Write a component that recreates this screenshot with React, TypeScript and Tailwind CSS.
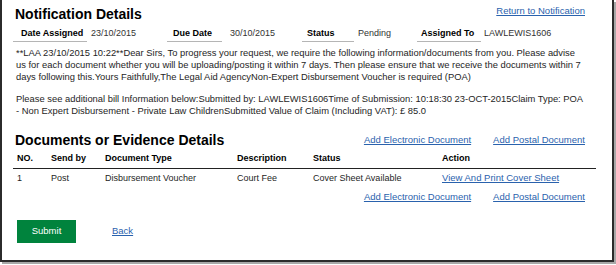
import React from 'react';

// Summary fields shown under the title
const fields = [
  { label: "Date Assigned", value: "23/10/2015", width: "w-[154px]", labelBox: "w-[74px] pl-[8px]", valueGap: "ml-[4px]" },
  { label: "Due Date", value: "30/10/2015", width: "w-[135px]", labelBox: "w-[55px] pl-[6px]", valueGap: "ml-[8px]" },
  { label: "Status", value: "Pending", width: "w-[115px]", labelBox: "w-[52px] pl-[5px]", valueGap: "ml-[4px]" },
  { label: "Assigned To", value: "LAWLEWIS1606", width: "flex-1", labelBox: "w-[64px] pl-[4px]", valueGap: "ml-[3px]" },
];

const columns = ["NO.", "Send by", "Document Type", "Description", "Status", "Action"];

const linkCls = "text-[#2a62ad] underline underline-offset-1 decoration-[#2a62ad]";

const AddLinks = () => (
  <div className="ml-auto mr-[11px] flex gap-[22px] text-[9.5px] leading-[12px]">
    <a href="#" className={linkCls}>Add Electronic Document</a>
    <a href="#" className={linkCls}>Add Postal Document</a>
  </div>
);

const NotificationDetails = () => {
  return (
    <div className="w-[616px] h-[265px] bg-white font-['Liberation_Sans',Arial,sans-serif] text-[#1e1e1e]">
      <div className="w-[614px] h-[262px] border-2 border-t-0 border-[#2b2b2b] shadow-[2px_2px_0_#a8a8a8] pl-[11px] pr-[16px]">
        {/* title row */}
        <div className="flex items-start h-[27px]">
          <h1 className="pl-[2px] pt-[7px] text-[14px] leading-[14px] font-bold text-black">Notification Details</h1>
          <a href="#" className={`ml-auto mr-[11px] mt-[5px] text-[9.5px] leading-[12px] ${linkCls}`}>Return to Notification</a>
        </div>

        {/* summary fields */}
        <div className="flex text-[9px] leading-[12px]">
          {fields.map((f) => (
            <div key={f.label} className={`flex items-start ${f.width}`}>
              <span className={`${f.labelBox} pb-[2px] border-b border-[#b5b5b5] font-bold text-black`}>{f.label}</span>
              <span className={`${f.valueGap} text-[#333]`}>{f.value}</span>
            </div>
          ))}
        </div>

        {/* message */}
        <div className="w-[568px] ml-[3px] text-[9.4px] leading-[12px] text-[#1e1e1e]">
          <p className="mt-[5px]">
            **LAA 23/10/2015 10:22**Dear Sirs, To progress your request, we require the following information/documents from you. Please advise us for each document whether you will be uploading/posting it within 7 days. Then please ensure that we receive the documents within 7 days following this.Yours Faithfully,The Legal Aid AgencyNon-Expert Disbursement Voucher is required (POA)
          </p>
          <p className="mt-[10px]">
            Please see additional bill Information below:Submitted by: LAWLEWIS1606Time of Submission: 10:18:30 23-OCT-2015Claim Type: POA - Non Expert Disbursement - Private Law ChildrenSubmitted Value of Claim (Including VAT): £ 85.0
          </p>
        </div>

        {/* documents heading */}
        <div className="flex items-center mt-[16px] h-[14px]">
          <h2 className="pl-[2px] text-[14px] leading-[14px] font-bold text-black">Documents or Evidence Details</h2>
          <AddLinks />
        </div>

        {/* table */}
        <div className="mt-[5px] text-[9px] leading-[12px]">
          <div className="grid grid-cols-[34px_54px_132px_76px_129px_1fr] pb-[4px] border-b border-[#222] font-bold text-black">
            {columns.map((c) => (
              <div key={c} className="pl-[4px]">{c}</div>
            ))}
          </div>
          <div className="grid grid-cols-[34px_54px_132px_76px_129px_1fr] pt-[3px]">
            <div className="pl-[4px]">1</div>
            <div className="pl-[4px]">Post</div>
            <div className="pl-[4px]">Disbursement Voucher</div>
            <div className="pl-[4px]">Court Fee</div>
            <div className="pl-[4px]">Cover Sheet Available</div>
            <div className="pl-[4px]">
              <a href="#" className={`text-[9.5px] ${linkCls}`}>View And Print Cover Sheet</a>
            </div>
          </div>
          <div className="flex mt-[7px]">
            <AddLinks />
          </div>
        </div>

        {/* actions */}
        <div className="flex items-center mt-[17px] pl-[4px]">
          <button className="w-[59px] h-[23px] bg-[#00833d] text-white text-[9.5px]">Submit</button>
          <a href="#" className={`ml-[36px] text-[9.5px] ${linkCls}`}>Back</a>
        </div>
      </div>
    </div>
  );
};

export default NotificationDetails;
